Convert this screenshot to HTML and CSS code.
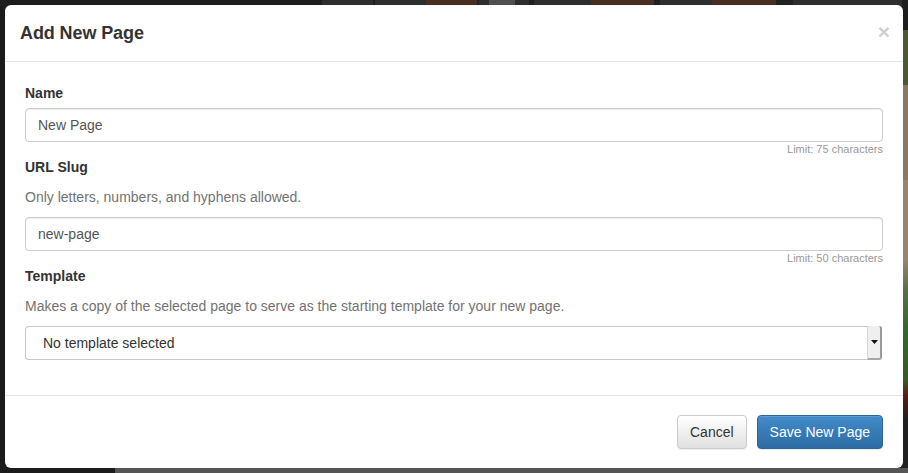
FILE: index.html
```html
<!DOCTYPE html>
<html>
<head>
<meta charset="utf-8">
<link rel="stylesheet" href="styles.css">
</head>
<body>
<div class="backdrop-top"></div>
<div class="backdrop-right"></div>
<div class="backdrop-bottom"></div>
<div class="modal">
  <div class="modal-header">
    <h4 class="modal-title">Add New Page</h4>
    <button class="close" type="button">×</button>
  </div>
  <div class="modal-body">
    <div class="form-group">
      <label class="label">Name</label>
      <div class="input">New Page</div>
      <div class="limit">Limit: 75 characters</div>
    </div>
    <div class="form-group">
      <label class="label">URL Slug</label>
      <p class="help">Only letters, numbers, and hyphens allowed.</p>
      <div class="input">new-page</div>
      <div class="limit">Limit: 50 characters</div>
    </div>
    <div class="form-group">
      <label class="label">Template</label>
      <p class="help">Makes a copy of the selected page to serve as the starting template for your new page.</p>
      <div class="select">
        <span class="select-text">No template selected</span>
        <span class="select-btn"><svg width="7" height="4" viewBox="0 0 7 4"><path d="M0 0H7L3.5 4Z" fill="#111"/></svg></span>
      </div>
    </div>
  </div>
  <div class="modal-footer">
    <button class="btn btn-default" type="button">Cancel</button>
    <button class="btn btn-primary" type="button">Save New Page</button>
  </div>
</div>
</body>
</html>
```
FILE: styles.css
```css
* { box-sizing: border-box; }
html, body { margin: 0; padding: 0; }
body {
  width: 908px;
  height: 473px;
  overflow: hidden;
  background: #1b1b1b;
  font-family: "Liberation Sans", Arial, sans-serif;
  font-size: 14px;
  line-height: 20px;
  color: #333;
  padding: 5px;
  position: relative;
}
.backdrop-top {
  position: absolute;
  left: 0; top: 0;
  width: 908px; height: 6px;
  background: linear-gradient(to right,
    #1d1d1d 0 322px, #2e2e2e 322px 373px, #1f1f1f 373px 375px, #2e2e2e 375px 426px,
    #4a2e21 426px 477px, #242424 477px 479px, #2e2e2e 479px 489px, #505050 489px 515px,
    #2e2e2e 515px 529px, #202020 529px 534px, #2e2e2e 534px 591px, #4a2e21 591px 654px,
    #202020 654px 660px, #2e2e2e 660px 712px, #4a2e21 712px 776px, #222 776px 793px,
    #2e2e2e 793px 908px);
}
.backdrop-right {
  position: absolute;
  right: 0; top: 0;
  width: 6px; height: 473px;
  background: linear-gradient(to bottom,
    #1e1e1e 0 30px, #4b5a2e 30px 85px, #8a7a5c 85px 180px, #978668 180px 260px,
    #5a7040 290px, #2f6a2a 330px, #3a5a24 380px, #5a1e14 395px, #202020 420px 473px);
}
.backdrop-bottom {
  position: absolute;
  left: 115px; bottom: 0;
  width: 793px; height: 5px;
  background: #555;
}
.modal {
  position: relative;
  width: 898px;
  height: 463px;
  background: #fff;
  border-radius: 6px;
  display: flex;
  flex-direction: column;
}
.modal-header {
  display: flex;
  align-items: center;
  justify-content: space-between;
  padding: 15px 15px 15px 15px;
  min-height: 57px;
  border-bottom: 1px solid #e5e5e5;
}
.modal-title {
  margin: 0;
  font-size: 18px;
  line-height: 26px;
  font-weight: bold;
  color: #333;
  letter-spacing: -0.1px;
}
.close {
  background: none;
  border: 0;
  padding: 0;
  margin: -4px -2px 0 0;
  font-family: "Liberation Sans", Arial, sans-serif;
  font-size: 21px;
  line-height: 1;
  font-weight: bold;
  color: #cfcfcf;
  cursor: pointer;
}
.modal-body {
  padding: 21px 20px 20px 20px;
}
.label {
  display: block;
  font-weight: bold;
  margin-bottom: 5px;
  color: #333;
}
.help {
  margin: 10px 0 10px;
  color: #737373;
}
.input {
  height: 34px;
  border: 1px solid #ccc;
  border-radius: 4px;
  padding: 6px 12px;
  color: #555;
  box-shadow: inset 0 1px 1px rgba(0,0,0,0.075);
}
.limit {
  text-align: right;
  font-size: 11px;
  line-height: 15px;
  color: #999;
}
.select {
  height: 34px;
  display: flex;
  align-items: stretch;
  margin-right: 1px;
  border: 1px solid #c8c8c8;
  border-right: 0;
  border-radius: 4px 3px 3px 4px;
  color: #333;
}
.select-text {
  flex: 1;
  padding: 6px 0 6px 17px;
}
.select-btn {
  width: 15px;
  background: #efefef;
  border-left: 1px solid #d6d6d6;
  border-right: 2px solid #9a9a9a;
  border-bottom: 2px solid #a8a8a8;
  border-radius: 0 3px 3px 0;
  margin: -1px 0 -1px 0;
  display: flex;
  align-items: center;
  justify-content: center;
  padding-left: 1px;
}
.modal-footer {
  margin-top: 15px;
  padding: 19px 20px 20px;
  border-top: 1px solid #e5e5e5;
  display: flex;
  justify-content: flex-end;
  gap: 10px;
}
.btn {
  height: 34px;
  padding: 6px 12px;
  font-family: "Liberation Sans", Arial, sans-serif;
  font-size: 14px;
  line-height: 20px;
  border-radius: 4px;
  border: 1px solid;
  cursor: pointer;
}
.btn-default {
  color: #333;
  background: linear-gradient(to bottom, #fff 0%, #e0e0e0 100%);
  border-color: #ccc;
  box-shadow: inset 0 1px 0 rgba(255,255,255,.15), 0 1px 1px rgba(0,0,0,.075);
}
.btn-primary {
  color: #fff;
  background: linear-gradient(to bottom, #428bca 0%, #2d6ca2 100%);
  border-color: #2b669a;
  box-shadow: inset 0 1px 0 rgba(255,255,255,.15), 0 1px 1px rgba(0,0,0,.075);
}
```
